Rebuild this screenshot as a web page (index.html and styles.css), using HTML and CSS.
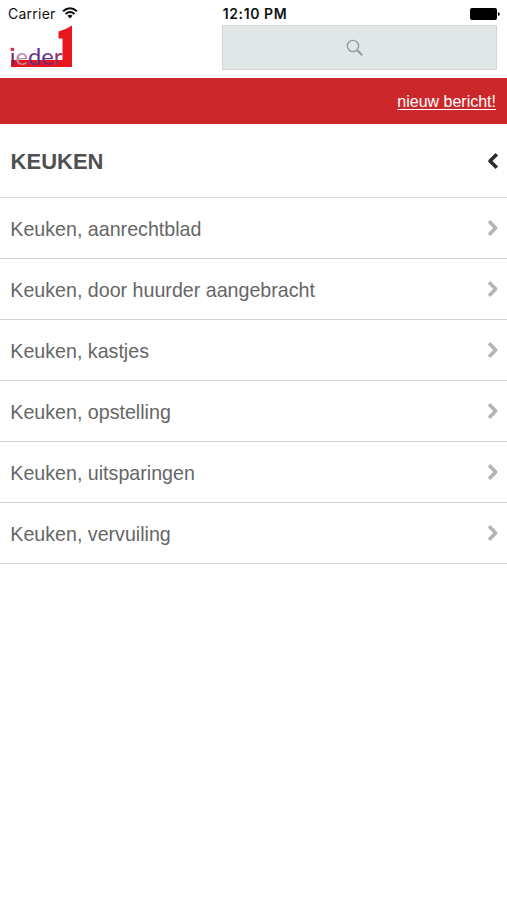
FILE: index.html
```html
<!DOCTYPE html>
<html lang="nl">
<head>
<meta charset="utf-8">
<meta name="viewport" content="width=device-width, initial-scale=1">
<title>Keuken</title>
<link rel="stylesheet" href="styles.css">
</head>
<body>
<div class="status">
  <div class="carrier"><span>Carrier</span>
    <svg width="16" height="12" viewBox="0 0 16 12" fill="none" stroke="#111" stroke-width="2"><path d="M1 4.3Q8-1.9 15 4.3M3.5 7Q8 3 12.5 7"/><path d="M5.4 8.7Q8 6.6 10.6 8.7L8 11.5Z" fill="#111" stroke="none"/></svg>
  </div>
  <div class="time">12:10 PM</div>
  <svg class="battery" width="30" height="12" viewBox="0 0 30 12"><rect width="27" height="12" rx="2"/><path d="M28 4Q29.8 4.5 29.8 6T28 8Z"/></svg>
</div>
<header class="top">
  <svg class="logo" width="66" height="46" viewBox="0 0 66 46">
    <path d="M1 35H52.5V13.5H48.5V6.5Q56 4.5 62 .5V42H1Z" fill="#e8171f"/>
    <text class="logo-text" x="-.2" y="40" textLength="52.5" lengthAdjust="spacingAndGlyphs"><tspan fill="#70276f">i</tspan><tspan fill="#b88ba5">e</tspan><tspan fill="#663184">d</tspan><tspan fill="#663184">e</tspan><tspan fill="#8f3864">r</tspan></text>
    <rect x=".6" y="22.8" width="3.2" height="3.2" rx="1" fill="#e52a37"/>
  </svg>
  <div class="search">
    <svg width="18" height="18" viewBox="0 0 18 18" fill="none" stroke="#959a9b"><circle cx="7" cy="7" r="5.6" stroke-width="1.4"/><path d="M11.2 11.2L16.3 16.3" stroke-width="2"/></svg>
  </div>
</header>
<div class="notice"><a>nieuw bericht!</a></div>
<div class="heading"><h1>KEUKEN</h1>
  <svg width="12" height="18" viewBox="0 0 12 18" fill="none" stroke="#2c2c2c" stroke-width="3.6"><path d="M9.8 2.3L3 9L9.8 15.7" stroke-linejoin="round"/></svg>
</div>
<ul class="list">
  <li><span>Keuken, aanrechtblad</span><svg class="chev" viewBox="0 0 12 18"><path d="M2 2.3L8.7 9L2 15.7"/></svg></li>
  <li><span>Keuken, door huurder aangebracht</span><svg class="chev" viewBox="0 0 12 18"><path d="M2 2.3L8.7 9L2 15.7"/></svg></li>
  <li><span>Keuken, kastjes</span><svg class="chev" viewBox="0 0 12 18"><path d="M2 2.3L8.7 9L2 15.7"/></svg></li>
  <li><span>Keuken, opstelling</span><svg class="chev" viewBox="0 0 12 18"><path d="M2 2.3L8.7 9L2 15.7"/></svg></li>
  <li><span>Keuken, uitsparingen</span><svg class="chev" viewBox="0 0 12 18"><path d="M2 2.3L8.7 9L2 15.7"/></svg></li>
  <li><span>Keuken, vervuiling</span><svg class="chev" viewBox="0 0 12 18"><path d="M2 2.3L8.7 9L2 15.7"/></svg></li>
</ul>
</body>
</html>
```
FILE: styles.css
```css
* { box-sizing: border-box; }
body {
  margin: 0;
  background: #fff;
  color: #666;
  font-family: "Liberation Sans", Arial, sans-serif;
}
svg { display: block; flex: none; }
.status {
  display: grid;
  grid-template-columns: 1fr auto 1fr;
  align-items: center;
  height: 25px;
  padding: 2px 7px 0 8px;
  color: #111;
  font: 14px/20px Inter, sans-serif;
}
.carrier { display: flex; align-items: center; gap: 6px; letter-spacing: 0.25px; }
.carrier svg { margin-top: -2px; }
.time { padding-left: 2px; font-weight: 600; letter-spacing: 0.6px; }
.battery { justify-self: end; }
.top {
  display: flex;
  justify-content: space-between;
  height: 53px;
  padding: 0 10px;
}
.logo-text { font: 23.5px Lato, sans-serif; }
.search {
  display: flex;
  align-items: center;
  justify-content: center;
  width: 275px;
  height: 45px;
  padding: 0 9px 0 0;
  border: 1px solid #d3d6d6;
  background: #e1e7e7;
}
.notice {
  height: 46px;
  padding: 0 11px;
  background: #cc282c;
  color: #fff;
  font-size: 16px;
  line-height: 47px;
  text-align: right;
}
.notice a { text-decoration: underline; text-underline-offset: 2px; text-decoration-thickness: 1px; }
.heading {
  display: flex;
  align-items: center;
  justify-content: space-between;
  height: 73.6px;
  padding: 3px 8px 0 10.6px;
  border-bottom: 1px solid #d6d6d6;
}
.heading svg { margin-top: -2px; }
h1 { margin: 0; color: #505050; font-size: 22px; line-height: 28px; }
.list { margin: 0; padding: 0; list-style: none; }
.list li {
  display: flex;
  align-items: center;
  justify-content: space-between;
  height: 61.1px;
  padding: 2.5px 8.5px 0 10.3px;
  border-bottom: 1px solid #d4d4d4;
  font-size: 19.65px;
  line-height: 28px;
}
.chev { width: 12px; height: 18px; margin-top: -2px; fill: none; stroke: #b4b4b4; stroke-width: 3.6; stroke-linejoin: round; }
```
